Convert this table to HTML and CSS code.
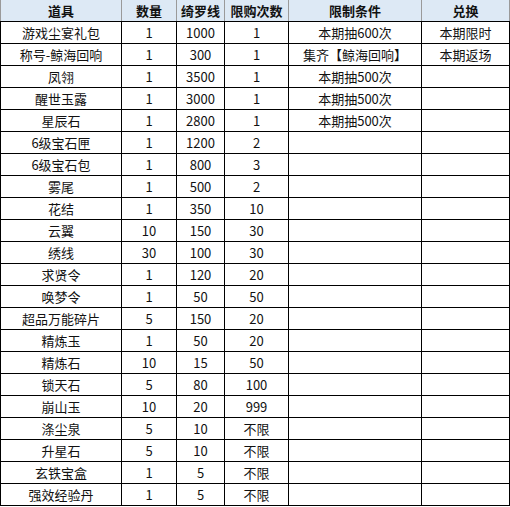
FILE: index.html
```html
<!DOCTYPE html>
<html>
<head>
<meta charset="utf-8">
<link rel="stylesheet" href="styles.css">
</head>
<body>
<table class="tbl">
  <colgroup>
    <col class="c1"><col class="c2"><col class="c3"><col class="c4"><col class="c5"><col class="c6">
  </colgroup>
  <thead>
    <tr class="head"><th>道具</th><th>数量</th><th>绮罗线</th><th>限购次数</th><th>限制条件</th><th>兑换</th></tr>
  </thead>
  <tbody>
    <tr><td>游戏尘宴礼包</td><td>1</td><td>1000</td><td>1</td><td>本期抽600次</td><td>本期限时</td></tr>
    <tr><td>称号-鲸海回响</td><td>1</td><td>300</td><td>1</td><td>集齐【鲸海回响】</td><td>本期返场</td></tr>
    <tr><td>凤翎</td><td>1</td><td>3500</td><td>1</td><td>本期抽500次</td><td></td></tr>
    <tr><td>醒世玉露</td><td>1</td><td>3000</td><td>1</td><td>本期抽500次</td><td></td></tr>
    <tr><td>星辰石</td><td>1</td><td>2800</td><td>1</td><td>本期抽500次</td><td></td></tr>
    <tr><td>6级宝石匣</td><td>1</td><td>1200</td><td>2</td><td></td><td></td></tr>
    <tr><td>6级宝石包</td><td>1</td><td>800</td><td>3</td><td></td><td></td></tr>
    <tr><td>雾尾</td><td>1</td><td>500</td><td>2</td><td></td><td></td></tr>
    <tr><td>花结</td><td>1</td><td>350</td><td>10</td><td></td><td></td></tr>
    <tr><td>云翼</td><td>10</td><td>150</td><td>30</td><td></td><td></td></tr>
    <tr><td>绣线</td><td>30</td><td>100</td><td>30</td><td></td><td></td></tr>
    <tr><td>求贤令</td><td>1</td><td>120</td><td>20</td><td></td><td></td></tr>
    <tr><td>唤梦令</td><td>1</td><td>50</td><td>50</td><td></td><td></td></tr>
    <tr><td>超品万能碎片</td><td>5</td><td>150</td><td>20</td><td></td><td></td></tr>
    <tr><td>精炼玉</td><td>1</td><td>50</td><td>20</td><td></td><td></td></tr>
    <tr><td>精炼石</td><td>10</td><td>15</td><td>50</td><td></td><td></td></tr>
    <tr><td>锁天石</td><td>5</td><td>80</td><td>100</td><td></td><td></td></tr>
    <tr><td>崩山玉</td><td>10</td><td>20</td><td>999</td><td></td><td></td></tr>
    <tr><td>涤尘泉</td><td>5</td><td>10</td><td>不限</td><td></td><td></td></tr>
    <tr><td>升星石</td><td>5</td><td>10</td><td>不限</td><td></td><td></td></tr>
    <tr><td>玄铁宝盒</td><td>1</td><td>5</td><td>不限</td><td></td><td></td></tr>
    <tr><td>强效经验丹</td><td>1</td><td>5</td><td>不限</td><td></td><td></td></tr>
  </tbody>
</table>
</body>
</html>
```
FILE: styles.css
```css
html, body {
  margin: 0;
  padding: 0;
  background: #ffffff;
}
.tbl {
  width: 510px;
  table-layout: fixed;
  border-collapse: collapse;
  font-family: "Noto Sans CJK SC", "Microsoft YaHei", sans-serif;
  font-size: 13px;
  color: #111;
}
.c1 { width: 121px; }
.c2 { width: 55px; }
.c3 { width: 48px; }
.c4 { width: 64px; }
.c5 { width: 133px; }
.tbl th, .tbl td {
  padding: 0;
  text-align: center;
  vertical-align: middle;
  line-height: 16px;
  white-space: nowrap;
  overflow: hidden;
}
.tbl td {
  height: 21px;
  border: 1px solid #000;
}
.tbl th {
  height: 21px;
  background: #dde9f5;
  font-weight: bold;
  border: 1px solid #9a9a9a;
  border-top: none;
  border-bottom: 1px solid #000;
}
```
